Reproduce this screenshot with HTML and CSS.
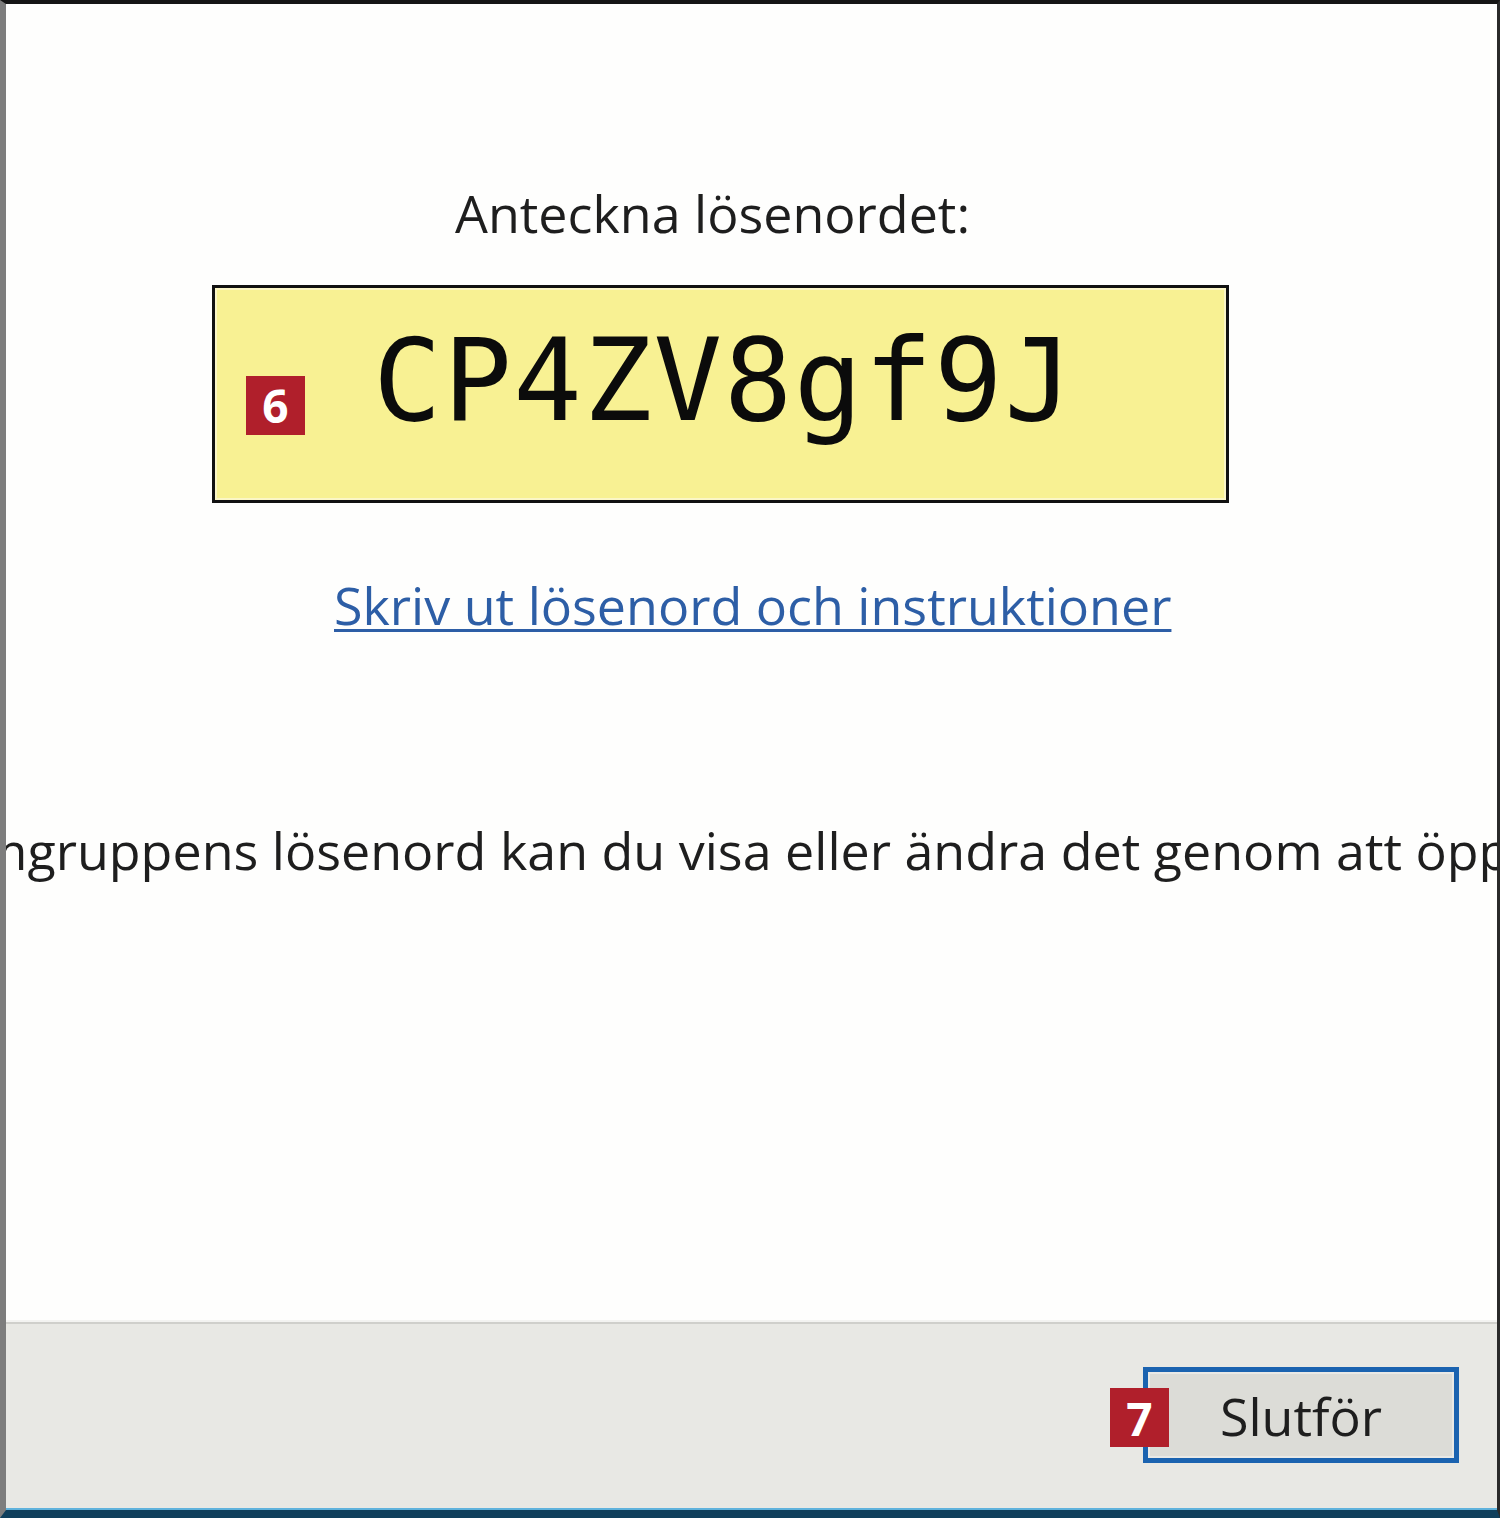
FILE: index.html
```
<!DOCTYPE html>
<html lang="sv">
<head>
  <meta charset="UTF-8" />
  <meta name="viewport" content="width=device-width, initial-scale=1.0"/>
  <title>Hemgrupp</title>
  <link rel="stylesheet" href="styles.css">
</head>
<body>

  <div class="window">

    <!-- Main content -->
    <main class="content">
      <p class="prompt">Anteckna lösenordet:</p>

      <div class="password-box">
        <span class="step">6</span>
        <span class="password">CP4ZV8gf9J</span>
      </div>

      <a class="print-link" href="#">Skriv ut lösenord och instruktioner</a>

      <p class="hint">Om du glömmer hemgruppens lösenord kan du visa eller ändra det genom att öppna Hemgrupp på Kontrollpanelen.</p>
    </main>

    <!-- Footer with buttons -->
    <footer class="footer">
      <div class="button-wrap">
        <span class="step step-7">7</span>
        <button class="finish">Slutför</button>
      </div>
    </footer>

  </div>

</body>
</html>
```

FILE: styles.css
```
html, body {
  margin: 0;
  padding: 0;
  background: #fff;
}
body {
  font-family: "Open Sans", "Noto Sans", sans-serif;
  color: #1e1e1e;
}
.window {
  width: 1500px;
  height: 1518px;
  box-sizing: border-box;
  border-top: 4px solid #151515;
  border-left: 6px solid #7d7d7d;
  border-right: 3px solid #2a2a2a;
  border-bottom: 8px solid #0f3f5c;
  display: flex;
  flex-direction: column;
  background: #fefefd;
}
.content {
  flex: 1;
  display: flex;
  flex-direction: column;
  overflow: hidden;
  border-bottom: 2px solid #f3f3f1;
}
.prompt {
  margin: 173px 0 0 449px;
  font-size: 52px;
  line-height: 72px;
}
.password-box {
  margin: 36px 0 0 206px;
  width: 1017px;
  height: 218px;
  box-sizing: border-box;
  border: 3px solid #111;
  background: #f8f193;
  box-shadow: inset 0 0 0 2px #fbf6c6;
  display: flex;
  align-items: center;
}
.step {
  display: inline-flex;
  align-items: center;
  justify-content: center;
  width: 59px;
  height: 59px;
  background: #b01f2b;
  color: #fff;
  font-weight: 700;
  font-size: 46px;
  line-height: 1;
}
.password-box .step {
  margin: 22px 0 0 31px;
}
.password {
  margin: -28px 0 0 68px;
  font-family: "DejaVu Sans Mono", "Liberation Mono", monospace;
  font-size: 114px;
  letter-spacing: 1.5px;
  color: #0b0b0b;
}
.print-link {
  margin: 72px 0 0 328px;
  align-self: flex-start;
  font-size: 52px;
  line-height: 60px;
  color: #2d5ea6;
  text-decoration: underline;
  text-decoration-thickness: 3px;
  text-underline-offset: 4px;
}
.hint {
  margin: 185px 0 0 0;
  white-space: nowrap;
  font-size: 52px;
  line-height: 60px;
  text-indent: -500px;
}
.footer {
  height: 188px;
  border-top: 2px solid #cfcfcb;
  border-bottom: 2px solid #5fb2dc;
  background: #e8e8e4;
  display: flex;
  justify-content: flex-end;
  align-items: flex-start;
  padding: 43px 38px 0 0;
  box-sizing: border-box;
}
.button-wrap {
  position: relative;
}
.finish {
  width: 316px;
  height: 96px;
  border: 5px solid #1b63b0;
  background: #dcdcd7;
  box-shadow: inset 0 0 0 2px #e9e9e6;
  font-family: "Open Sans", "Noto Sans", sans-serif;
  font-size: 52px;
  color: #1e1e1e;
  padding: 0;
}
.step-7 {
  position: absolute;
  left: -33px;
  top: 21px;
}
```
